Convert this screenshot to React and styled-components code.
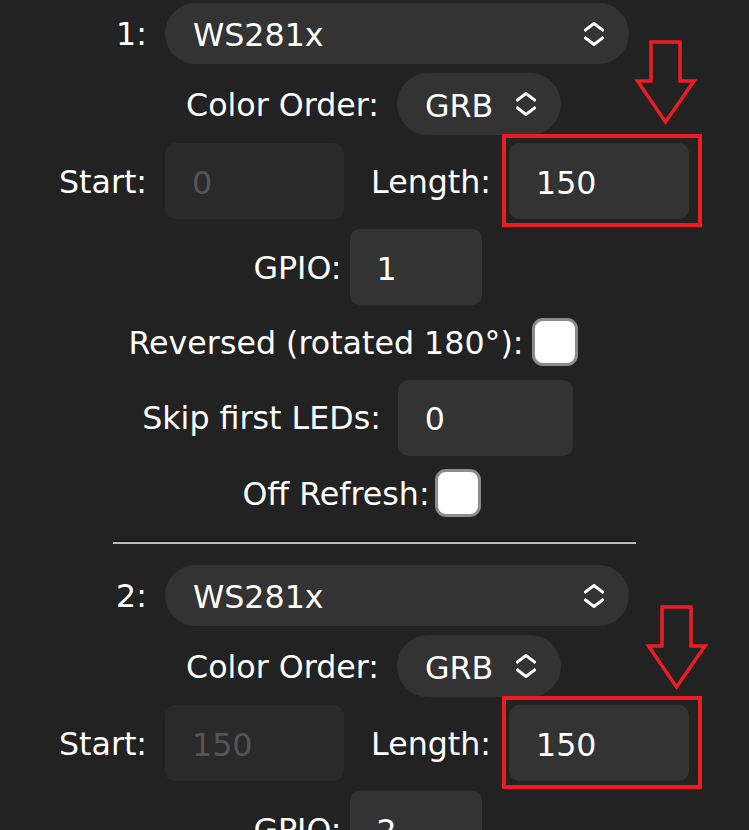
import styled, { createGlobalStyle } from "styled-components";

const GlobalStyle = createGlobalStyle`
  html, body {
    margin: 0;
    padding: 0;
    background: #222222;
    overflow: hidden;
  }
  body {
    font-family: "DejaVu Sans", Verdana, sans-serif;
    color: #ffffff;
  }
`;

const Page = styled.div`
  padding-top: 3px;
  display: flex;
  flex-direction: column;
`;

const Block = styled.section`
  display: flex;
  flex-direction: column;
`;

const Row = styled.div`
  display: flex;
  justify-content: center;
  align-items: center;
  height: ${(p) => p.$h}px;
  margin-top: ${(p) => p.$mt || 0}px;
  padding-right: ${(p) => p.$shift || 0}px;
`;

const Label = styled.span`
  font-size: 31.7px;
  line-height: 1;
  padding-top: 3px;
  white-space: nowrap;
  margin-right: ${(p) => (p.$gap == null ? 19 : p.$gap)}px;
  margin-left: ${(p) => p.$before || 0}px;
`;

const Select = styled.div`
  box-sizing: border-box;
  width: ${(p) => p.$w}px;
  height: ${(p) => p.$h || 61}px;
  border-radius: 31px;
  background: #333333;
  display: flex;
  align-items: center;
  justify-content: space-between;
  padding: 0 25px 0 28px;
  font-size: 31.7px;
  color: #fff;

  span {
    padding-top: 3px;
  }
`;

const Field = styled.input`
  box-sizing: border-box;
  width: ${(p) => p.$w}px;
  height: 76px;
  border: 0;
  border-radius: 10px;
  background: #333333;
  color: #ffffff;
  font-family: "DejaVu Sans", Verdana, sans-serif;
  font-size: 31.7px;
  padding: 3px 0 0 27px;
  margin: 0;
  outline: none;

  &:disabled {
    background: #2a2a2a;
    color: #555555;
  }
`;

const Check = styled.input`
  appearance: none;
  box-sizing: border-box;
  width: 46px;
  height: 48px;
  margin: 0;
  border: 3px solid #8c8c8c;
  border-radius: 11px;
  background: #ffffff;
`;

const Divider = styled.hr`
  width: 523px;
  height: 0;
  margin: 11px auto 21px;
  border: 0;
  border-top: 1px solid #111111;
  border-bottom: 2px solid #bdbdbd;
`;

const Marked = styled.span`
  position: relative;
  display: inline-flex;
`;

const Highlight = styled.span`
  position: absolute;
  left: -7px;
  top: -9px;
  right: -13px;
  bottom: -8px;
  border: 4px solid #ed1c24;
  pointer-events: none;
`;

const ArrowMark = styled.svg`
  position: absolute;
  left: ${(p) => p.$x}px;
  top: ${(p) => p.$y}px;
  width: 60px;
  height: 85px;
  overflow: visible;
`;

const Chevrons = () => (
  <svg width="20" height="24" viewBox="0 0 20 24" fill="none">
    <path d="M1.5 8 L10 1.5 L18.5 8" stroke="#fff" strokeWidth="3" strokeLinecap="square" />
    <path d="M1.5 16 L10 22.5 L18.5 16" stroke="#fff" strokeWidth="3" strokeLinecap="square" />
  </svg>
);

const DownArrow = ({ x, y }) => (
  <ArrowMark $x={x} $y={y} viewBox="0 0 60 85">
    <polygon
      points="15,2 44,2 44,41 58,41 29.5,82 1.5,41 15,41"
      fill="none"
      stroke="#ed1c24"
      strokeWidth="3.5"
      strokeLinejoin="miter"
    />
  </ArrowMark>
);

const strips = [
  { id: 1, start: 0, length: 150, gpio: 1, arrowX: 127, arrowY: -103 },
  { id: 2, start: 150, length: 150, gpio: 2, arrowX: 138, arrowY: -100 },
];

function Strip({ strip, last }) {
  return (
    <Block>
      <Row $h={61} $shift={4}>
        <Label $gap={18}>{strip.id}:</Label>
        <Select $w={464}>
          <span>WS281x</span>
          <Chevrons />
        </Select>
      </Row>
      <Row $h={62} $mt={9} $shift={2}>
        <Label $gap={18}>Color Order:</Label>
        <Select $w={164} $h={62}>
          <span>GRB</span>
          <Chevrons />
        </Select>
      </Row>
      <Row $h={76} $mt={8} $shift={1}>
        <Label $gap={18}>Start:</Label>
        <Field $w={179} value={strip.start} disabled readOnly />
        <Label $before={27} $gap={18}>Length:</Label>
        <Marked>
          <Field $w={180} defaultValue={strip.length} />
          <Highlight />
          <DownArrow x={strip.arrowX} y={strip.arrowY} />
        </Marked>
      </Row>
      <Row $h={76} $mt={10} $shift={14}>
        <Label $gap={8}>GPIO:</Label>
        <Field $w={132} defaultValue={strip.gpio} />
      </Row>
      <Row $h={74} $shift={42}>
        <Label $gap={9}>Reversed (rotated 180°):</Label>
        <Check type="checkbox" />
      </Row>
      <Row $h={77} $shift={34}>
        <Label $gap={17}>Skip first LEDs:</Label>
        <Field $w={175} defaultValue={0} />
      </Row>
      <Row $h={74} $shift={26}>
        <Label $gap={5}>Off Refresh:</Label>
        <Check type="checkbox" />
      </Row>
      {!last && <Divider />}
    </Block>
  );
}

export default function App() {
  return (
    <>
      <GlobalStyle />
      <Page>
        {strips.map((s, i) => (
          <Strip key={s.id} strip={s} last={i === strips.length - 1} />
        ))}
      </Page>
    </>
  );
}
